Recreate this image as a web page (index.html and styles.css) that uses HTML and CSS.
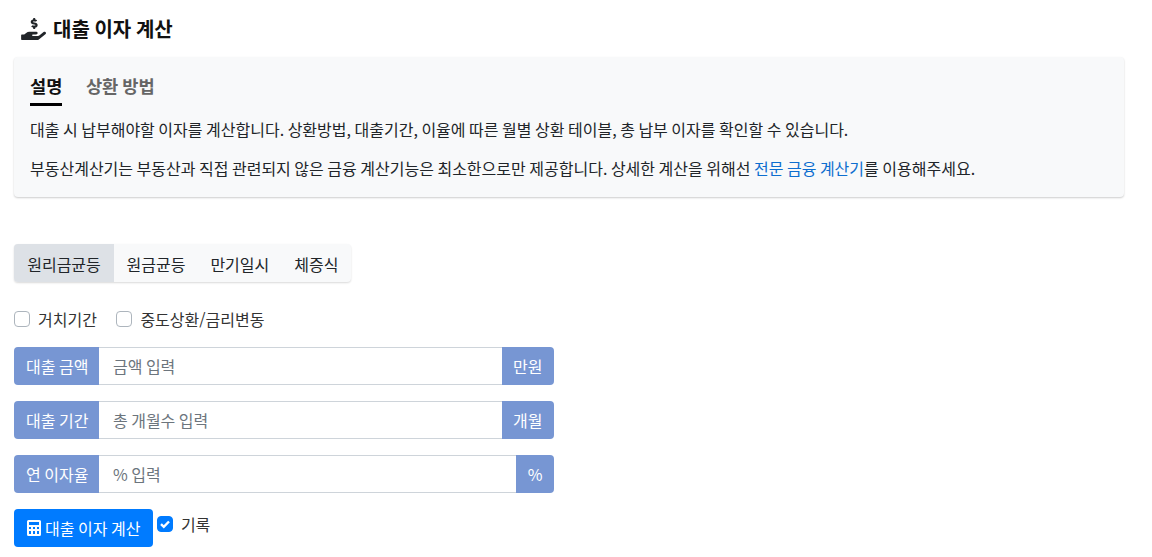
FILE: index.html
```html
<!DOCTYPE html>
<html lang="ko">
<head>
<meta charset="utf-8">
<title>대출 이자 계산</title>
<link rel="stylesheet" href="styles.css">
</head>
<body>
<h1 class="title">
  <svg class="title-icon" viewBox="0 0 576 512"><path fill="#212529" d="M271.06,144.3l54.27,14.3a8.59,8.59,0,0,1,6.63,8.1c0,4.6-4.09,8.4-9.12,8.4h-35.6a30,30,0,0,1-11.19-2.2c-5.24-2.2-11.28-1.7-15.3,2l-19,17.5a11.68,11.68,0,0,0-2.25,2.66,11.42,11.42,0,0,0,3.88,15.74,83.77,83.77,0,0,0,34.51,11.5V240c0,8.8,7.83,16,17.37,16h17.37c9.55,0,17.38-7.2,17.38-16V222.4c32.93-3.6,57.84-31,53.5-63-3.15-23-22.46-41.3-46.56-47.7L282.68,97.4a8.59,8.59,0,0,1-6.63-8.1c0-4.6,4.09-8.4,9.12-8.4h35.6A30,30,0,0,1,332,83.1c5.23,2.2,11.28,1.7,15.3-2l19-17.5A11.31,11.31,0,0,0,368.47,61a11.43,11.43,0,0,0-3.84-15.78,83.82,83.82,0,0,0-34.52-11.5V16c0-8.8-7.82-16-17.37-16H295.37C285.82,0,278,7.2,278,16V33.6c-32.89,3.6-57.85,31-53.51,63C227.63,119.6,247,137.9,271.06,144.3ZM565.27,328.1c-11.8-10.7-30.2-10-42.6,0L430.27,402a63.64,63.64,0,0,1-40,14H272a16,16,0,0,1,0-32h78.29c15.9,0,30.71-10.9,33.25-26.6a31.2,31.2,0,0,0,.46-5.46A32,32,0,0,0,352,320H192a117.66,117.66,0,0,0-74.1,26.29L71.4,384H16A16,16,0,0,0,0,400v96a16,16,0,0,0,16,16H372.77a64,64,0,0,0,40-14L564,377a32,32,0,0,0,1.27-48.9Z"/></svg>
  대출 이자 계산
</h1>
<section class="panel">
  <div class="tabs">
    <a class="tab active">설명</a>
    <a class="tab">상환 방법</a>
  </div>
  <p class="para">대출 시 납부해야할 이자를 계산합니다. 상환방법, 대출기간, 이율에 따른 월별 상환 테이블, 총 납부 이자를 확인할 수 있습니다.</p>
  <p class="para">부동산계산기는 부동산과 직접 관련되지 않은 금융 계산기능은 최소한으로만 제공합니다. 상세한 계산을 위해선 <a class="link">전문 금융 계산기</a>를 이용해주세요.</p>
</section>
<div class="segments">
  <button class="segment on">원리금균등</button>
  <button class="segment">원금균등</button>
  <button class="segment">만기일시</button>
  <button class="segment">체증식</button>
</div>
<div class="options">
  <label class="check"><span class="box"></span>거치기간</label>
  <label class="check"><span class="box"></span>중도상환/금리변동</label>
</div>
<div class="field">
  <span class="addon start">대출 금액</span>
  <input class="control" placeholder="금액 입력">
  <span class="addon end">만원</span>
</div>
<div class="field">
  <span class="addon start">대출 기간</span>
  <input class="control" placeholder="총 개월수 입력">
  <span class="addon end">개월</span>
</div>
<div class="field">
  <span class="addon start">연 이자율</span>
  <input class="control" placeholder="% 입력">
  <span class="addon end">%</span>
</div>
<div class="actions">
  <button class="submit">
    <svg class="calc" viewBox="0 0 14 16"><path fill="#fff" fill-rule="evenodd" d="M1.5 0h11A1.5 1.5 0 0 1 14 1.5v13a1.5 1.5 0 0 1-1.5 1.5h-11A1.5 1.5 0 0 1 0 14.500v-13A1.500 1.500 0 0 1 1.500 0ZM2 2v3h10V2ZM2 7v2h2V7Zm4 0v2h2V7Zm4 0v2h2V7ZM2 11v3h2v-3Zm4 0v3h2v-3Zm4 0v3h2v-3Z"/></svg>대출 이자 계산
  </button>
  <label class="check record"><span class="box checked"><svg viewBox="0 0 16 16"><path fill="none" stroke="#fff" stroke-width="2.400" d="M4 8.200l2.800 2.600L12 5.500"/></svg></span>기록</label>
</div>
</body>
</html>
```
FILE: styles.css
```css
* { box-sizing: border-box; }
html, body { margin: 0; padding: 0; }
body {
  padding: 0 14px;
  background: #fff;
  color: #212529;
  font-family: "Noto Sans CJK KR", "Noto Sans", sans-serif;
  font-size: 16px;
  line-height: 1.5;
  word-spacing: -.95px;
}
.title {
  display: flex;
  align-items: center;
  gap: 7px;
  height: 57px;
  margin: 0;
  padding: 1px 0 0 7px;
  font-size: 20px;
  font-weight: 700;
  color: #111;
}
.title-icon { width: 25px; height: 22px; }
.panel {
  width: 1110px;
  height: 140px;
  padding: 12px 16px 0;
  background: #f8f9fa;
  border-radius: 4px;
  box-shadow: 0 1px 2px rgba(0, 0, 0, .2);
}
.tabs { display: flex; gap: 23.5px; height: 37px; margin-bottom: 12px; }
.tab {
  height: 37px;
  font-size: 17.6px;
  font-weight: 700;
  line-height: 34px;
  color: #666;
}
.tab.active { color: #111; border-bottom: 3px solid #000; }
.para { margin: 0 0 17px; line-height: 22px; }
.link { color: #0d6ecf; }
.segments {
  display: inline-flex;
  margin-top: 47px;
  background: #f8f9fa;
  border-radius: 4px;
  box-shadow: 0 1px 2px rgba(0, 0, 0, .15);
  vertical-align: top;
}
.segment {
  height: 38px;
  padding: 1px 12.5px 0;
  border: 0;
  background: transparent;
  font: inherit;
  word-spacing: inherit;
  color: #212529;
}
.segment:first-child { width: 100px; border-radius: 4px 0 0 4px; }
.segment.on { background: #dde1e6; }
.options { display: flex; gap: 19.5px; margin-top: 25px; height: 24px; align-items: center; }
.check { display: inline-flex; align-items: center; color: #333; }
.box {
  flex: none;
  width: 16px;
  height: 16px;
  margin-right: 8px;
  background: #fff;
  border: 1px solid #adb5bd;
  border-radius: 4px;
}
.box svg { display: block; width: 16px; height: 16px; margin: -1px; }
.box.checked { background: #007bff; border-color: #007bff; }
.field { display: flex; width: 540px; height: 38px; margin-bottom: 16px; }
.options + .field { margin-top: 16px; }
.addon {
  display: flex;
  align-items: center;
  padding: 0 11.5px;
  background: #7796d3;
  color: #fff;
}
.addon.start { border-radius: 4px 0 0 4px; padding: 0 11px 0 12px; }
.addon.end { border-radius: 0 4px 4px 0; }
.control {
  flex: 1;
  min-width: 0;
  padding: 0 13.5px;
  border: 1px solid #ced4da;
  border-width: 1px 0;
  font: inherit;
  word-spacing: inherit;
  color: #495057;
  outline: 0;
}
.control::placeholder { color: #6c757d; opacity: 1; }
.actions { display: flex; align-items: flex-start; }
.submit {
  display: flex;
  align-items: center;
  gap: 4px;
  height: 38px;
  padding: 0 13px;
  border: 0;
  border-radius: 4px;
  background: #007bff;
  color: #fff;
  font: inherit;
  word-spacing: inherit;
}
.calc { width: 14px; height: 16px; }
.record { margin: 3px 0 0 4px; }
.record .box { margin-right: 7.5px; }
```
